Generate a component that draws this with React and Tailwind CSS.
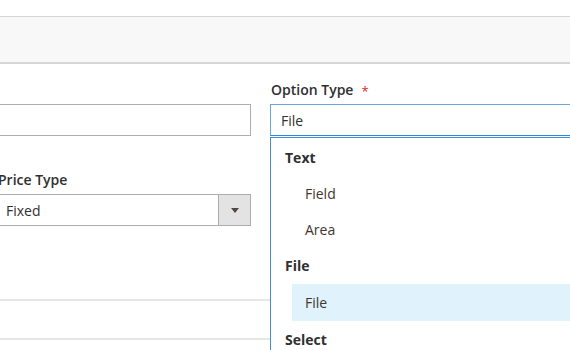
export default function App() {
  const font = { fontFamily: '"Open Sans", "Liberation Sans", sans-serif' };
  return (
    <div className="w-[570px] h-[350px] overflow-hidden bg-white relative text-[14px] text-[#303030]" style={font}>
      <div className="mt-[16px] h-[48px] border-t border-b-2 border-[#d6d6d6] bg-[#f8f8f8]" />
      <div className="flex">
        <div className="w-[256px] -ml-[5px] shrink-0 flex flex-col pt-[16px]">
          <div className="h-[24px]" />
          <div className="h-[32px] border border-[#adadad] bg-white" />
          <div className="mt-[34px] h-[20px] leading-[20px] pl-[3px] font-semibold">Price Type</div>
          <div className="mt-[4px] h-[32px] border border-[#adadad] flex">
            <div className="flex-1 flex items-center pl-[10px] text-[#303030]">Fixed</div>
            <div className="w-[32px] border-l border-[#adadad] bg-[#e3e3e3] flex items-center justify-center">
              <div className="w-0 h-0 border-l-[4px] border-r-[4px] border-t-[5px] border-l-transparent border-r-transparent border-t-[#514943]" />
            </div>
          </div>
        </div>
        <div className="ml-[19px] w-[320px] shrink-0 flex flex-col pt-[16px]">
          <div className="h-[24px] flex items-start">
            <span className="h-[20px] leading-[20px] pl-[1px] font-semibold">Option Type</span>
            <span className="ml-[8px] h-[20px] leading-[22px] text-[#e22626] text-[13px]">*</span>
          </div>
          <div className="relative">
            <div className="h-[32px] border border-[#68a8e0] border-b-[#2a86d6] flex items-center pl-[10px]">File</div>
            <div className="absolute left-0 top-[33px] w-[320px] h-[300px] border border-[#3d8fdb] bg-white pt-[1px]">
              <div className="h-[36px] flex items-center pl-[14px] font-bold">Text</div>
              <div className="h-[36px] ml-[21px] flex items-center pl-[13px] text-[#41362f]">Field</div>
              <div className="h-[36px] ml-[21px] flex items-center pl-[13px] text-[#41362f]">Area</div>
              <div className="h-[37px] flex items-center pl-[14px] font-bold">File</div>
              <div className="h-[37px] ml-[21px] flex items-center pl-[13px] bg-[#e0f3fc] text-[#41362f]">File</div>
              <div className="h-[36px] flex items-center pl-[14px] font-bold">Select</div>
            </div>
          </div>
        </div>
      </div>
      <div className="mt-[73px] h-[2px] bg-[#e6e6e6]" />
      <div className="mt-[37px] h-[2px] bg-[#e6e6e6]" />
    </div>
  );
}
